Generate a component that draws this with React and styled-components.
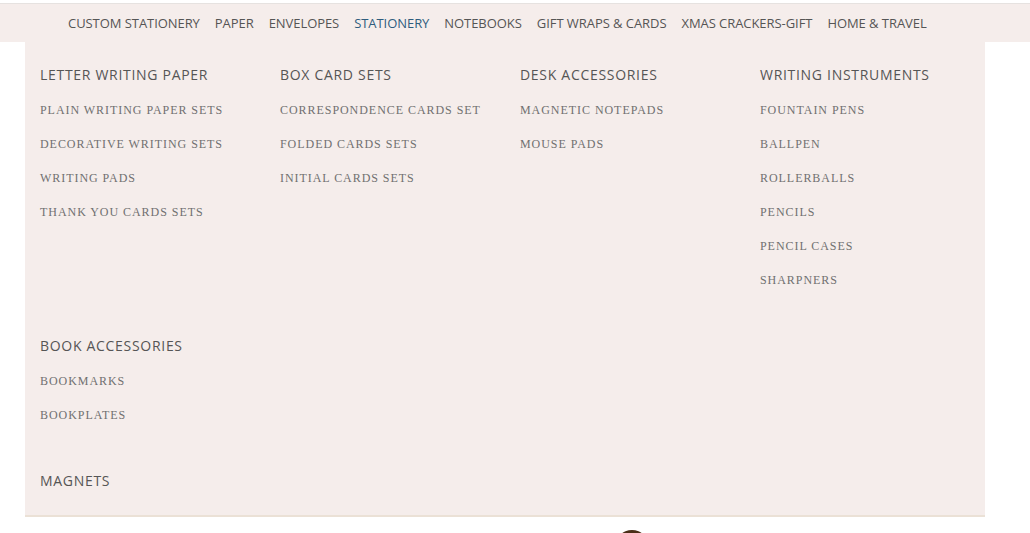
import React from 'react';
import styled, { createGlobalStyle } from 'styled-components';

const GlobalStyle = createGlobalStyle`
  html, body {
    margin: 0;
    padding: 0;
    background: #ffffff;
    overflow: hidden;
  }
  body {
    font-family: 'Open Sans', sans-serif;
  }
`;

const navItems = [
  'CUSTOM STATIONERY',
  'PAPER',
  'ENVELOPES',
  'STATIONERY',
  'NOTEBOOKS',
  'GIFT WRAPS & CARDS',
  'XMAS CRACKERS-GIFT',
  'HOME & TRAVEL',
];

const menuRows = [
  [
    {
      title: 'LETTER WRITING PAPER',
      items: ['PLAIN WRITING PAPER SETS', 'DECORATIVE WRITING SETS', 'WRITING PADS', 'THANK YOU CARDS SETS'],
    },
    {
      title: 'BOX CARD SETS',
      items: ['CORRESPONDENCE CARDS SET', 'FOLDED CARDS SETS', 'INITIAL CARDS SETS'],
    },
    {
      title: 'DESK ACCESSORIES',
      items: ['MAGNETIC NOTEPADS', 'MOUSE PADS'],
    },
    {
      title: 'WRITING INSTRUMENTS',
      items: ['FOUNTAIN PENS', 'BALLPEN', 'ROLLERBALLS', 'PENCILS', 'PENCIL CASES', 'SHARPNERS'],
    },
  ],
  [
    {
      title: 'BOOK ACCESSORIES',
      items: ['BOOKMARKS', 'BOOKPLATES'],
    },
  ],
  [
    {
      title: 'MAGNETS',
      items: [],
    },
  ],
];

function App() {
  return (
    <>
      <GlobalStyle />
      <StPage>
        <StNavBar>
          <StNavList>
            {navItems.map((item) => (
              <StNavItem key={item} active={item === 'STATIONERY'}>
                {item}
              </StNavItem>
            ))}
          </StNavList>
        </StNavBar>

        <StDropdown>
          {menuRows.map((row, index) => (
            <StRow key={index}>
              {row.map((group) => (
                <StColumn key={group.title}>
                  <StHeading>{group.title}</StHeading>
                  {group.items.map((item) => (
                    <StLink key={item}>{item}</StLink>
                  ))}
                </StColumn>
              ))}
            </StRow>
          ))}
        </StDropdown>

        <StBadgeRow>
          <StBadge />
        </StBadgeRow>
      </StPage>
    </>
  );
}

export default App;

const StPage = styled.div`
  width: 1030px;
  height: 533px;
  padding-top: 3px;
  box-sizing: border-box;
  overflow: hidden;
`;
const StNavBar = styled.div`
  height: 39px;
  background: #f5edeb;
  border-top: 1px solid #e6e2e0;
  box-sizing: border-box;
  display: flex;
  align-items: center;
`;
const StNavList = styled.div`
  display: flex;
  align-items: center;
  gap: 15px;
  padding-left: 68px;
`;
const StNavItem = styled.div`
  font-family: 'Open Sans', sans-serif;
  font-size: 13px;
  line-height: 20px;
  letter-spacing: -0.06px;
  color: ${({ active }) => (active ? '#2f5d7e' : '#555555')};
  white-space: nowrap;
`;
const StDropdown = styled.div`
  width: 960px;
  margin-left: 25px;
  background: #f5edeb;
  border-bottom: 2px solid #ebe1d6;
`;
const StRow = styled.div`
  display: grid;
  grid-template-columns: repeat(4, 240px);
  padding: 17px 0 16px;
`;
const StColumn = styled.div`
  display: flex;
  flex-direction: column;
  padding: 0 15px;
`;
const StHeading = styled.div`
  font-family: 'Open Sans', sans-serif;
  font-size: 14px;
  line-height: 32px;
  padding-bottom: 2px;
  letter-spacing: 0.7px;
  color: #555555;
  white-space: nowrap;
`;
const StLink = styled.div`
  font-family: 'Liberation Serif', serif;
  font-size: 12px;
  line-height: 34px;
  letter-spacing: 0.95px;
  color: #707070;
  white-space: nowrap;
`;
const StBadgeRow = styled.div`
  display: flex;
  padding: 13px 0 0 615px;
`;
const StBadge = styled.div`
  width: 34px;
  height: 34px;
  border-radius: 50%;
  background: #4a2e18;
`;
